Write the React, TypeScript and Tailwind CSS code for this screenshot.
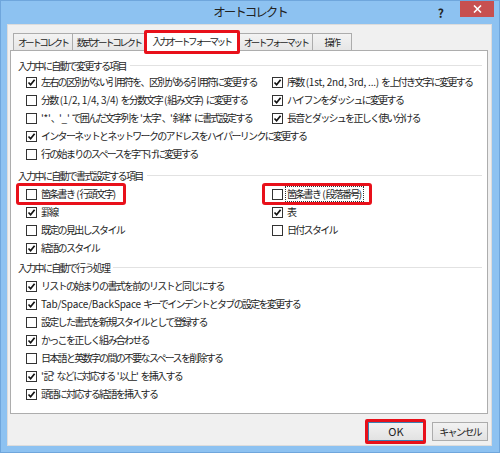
import React from "react";

type Item = { label: string; checked: boolean; mark?: boolean; focus?: boolean };

const typing: { left: Item[]; right: Item[] } = {
  left: [
    { label: "左右の区別がない引用符を、区別がある引用符に変更する", checked: true },
    { label: "分数 (1/2, 1/4, 3/4) を分数文字 (組み文字) に変更する", checked: false },
    { label: "'*'、'_' で囲んだ文字列を '太字'、'斜体' に書式設定する", checked: false },
    { label: "インターネットとネットワークのアドレスをハイパーリンクに変更する", checked: true },
    { label: "行の始まりのスペースを字下げに変更する", checked: false },
  ],
  right: [
    { label: "序数 (1st, 2nd, 3rd, ...) を上付き文字に変更する", checked: true },
    { label: "ハイフンをダッシュに変更する", checked: true },
    { label: "長音とダッシュを正しく使い分ける", checked: true },
  ],
};

const formatting: { left: Item[]; right: Item[] } = {
  left: [
    { label: "箇条書き (行頭文字)", checked: false, mark: true },
    { label: "罫線", checked: true },
    { label: "既定の見出しスタイル", checked: false },
    { label: "結語のスタイル", checked: true },
  ],
  right: [
    { label: "箇条書き (段落番号)", checked: false, mark: true, focus: true },
    { label: "表", checked: true },
    { label: "日付スタイル", checked: false },
  ],
};

const actions: Item[] = [
  { label: "リストの始まりの書式を前のリストと同じにする", checked: true },
  { label: "Tab/Space/BackSpace キーでインデントとタブの設定を変更する", checked: true },
  { label: "設定した書式を新規スタイルとして登録する", checked: false },
  { label: "かっこを正しく組み合わせる", checked: true },
  { label: "日本語と英数字の間の不要なスペースを削除する", checked: false },
  { label: "'記' などに対応する '以上' を挿入する", checked: true },
  { label: "頭語に対応する結語を挿入する", checked: true },
];

const tabs = ["オートコレクト", "数式オートコレクト", "入力オートフォーマット", "オートフォーマット", "操作"];

// kana/kanji are set tight, latin runs keep normal spacing
function Label({ text }: { text: string }) {
  const parts = text.split(/([\x20-\x7e]+)/).filter(Boolean);
  return (
    <>
      {parts.map((p, i) =>
        /^[\x20-\x7e]+$/.test(p) ? (
          <span key={i} className="tracking-[-0.2px] whitespace-pre">
            {p}
          </span>
        ) : (
          <span key={i}>{p}</span>
        )
      )}
    </>
  );
}

function Box({ checked }: { checked: boolean }) {
  return (
    <span className="flex h-[11px] w-[11px] shrink-0 items-center justify-center border border-[#333] bg-white">
      {checked && (
        <svg width="9" height="9" viewBox="0 0 9 9" fill="none">
          <path d="M1.5 4.5 L3.6 6.8 L7.6 1.8" stroke="#111" strokeWidth="1.7" />
        </svg>
      )}
    </span>
  );
}

function Row({ item }: { item: Item }) {
  return (
    <div className="relative flex h-[18px] w-fit items-center gap-[3px]">
      <Box checked={item.checked} />
      <span
        className={`whitespace-nowrap px-[1px] leading-[14px] ${
          item.focus ? "outline outline-1 outline-dotted outline-[#333]" : ""
        }`}
      >
        <Label text={item.label} />
      </span>
      {item.mark && (
        <div className="pointer-events-none absolute -left-[10px] -right-[9px] -top-[2px] -bottom-[2px] rounded-[3px] border-[3px] border-[#e8101a]" />
      )}
    </div>
  );
}

function Heading({ text }: { text: string }) {
  return (
    <div className="flex h-[16px] items-center gap-[4px] pr-[5px] text-[#1f1f1f]">
      <span className="whitespace-nowrap">{text}</span>
      <div className="h-px flex-1 bg-[#e2e2e2]" />
    </div>
  );
}

export default function App() {
  return (
    <div className="flex h-[453px] w-[500px] flex-col border border-[#6fa6dc] bg-[#8dc2f1] font-['Noto_Sans_CJK_JP',sans-serif] text-[10px] tracking-[-1.7px] text-[#1e1e1e]">
      {/* title bar */}
      <div className="relative flex h-[23px] shrink-0 items-center justify-center">
        <span className="text-[12.5px] tracking-[-2px] text-[#222]">オートコレクト</span>
        <div className="absolute right-[5px] top-0 flex items-start">
          <span className="mr-[16px] mt-[3px] text-[12px] font-bold tracking-normal text-[#222]">?</span>
          <div className="flex h-[16px] w-[34px] items-center justify-center bg-[#c75050]">
            <svg width="9" height="8" viewBox="0 0 9 8">
              <path d="M1 0.5 L8 7.5 M8 0.5 L1 7.5" stroke="white" strokeWidth="1.6" />
            </svg>
          </div>
        </div>
      </div>

      {/* client area */}
      <div className="mb-[6px] ml-[6px] mr-[7px] flex flex-1 flex-col border border-[#dcdcdc] bg-[#f0f0f0] pl-[2px]">
        <div className="mt-[6px] flex h-[19px] items-end pl-[3px] text-[9.5px] tracking-[-2.4px]">
          {tabs.map((t, i) =>
            i === 2 ? (
              <div key={t} className="relative z-10 -mb-px -ml-px flex h-[20px] items-center border border-b-0 border-[#acacac] bg-white px-[7px]">
                {t}
                <div className="pointer-events-none absolute -left-[2px] -right-[2px] -top-[2px] -bottom-[3px] rounded-[2px] border-[3px] border-[#e8101a]" />
              </div>
            ) : (
              <div
                key={t}
                className={`flex h-[17px] items-center justify-center border border-b-0 border-[#acacac] bg-gradient-to-b from-[#f3f3f3] to-[#e6e6e6] px-[4px] ${
                  i === 0 || i === 3 ? "" : "-ml-px"
                } ${i === 4 ? "w-[40px]" : ""}`}
              >
                {t}
              </div>
            )
          )}
        </div>

        {/* tab panel */}
        <div className="flex h-[364px] w-[478px] flex-col border border-[#adadad] bg-white pl-[7px] pt-[6px]">
          <Heading text="入力中に自動で変更する項目" />
          <div className="flex pl-[8px]">
            <div className="flex w-[246px] flex-col">
              {typing.left.map((it) => (
                <Row key={it.label} item={it} />
              ))}
            </div>
            <div className="flex flex-col">
              {typing.right.map((it) => (
                <Row key={it.label} item={it} />
              ))}
            </div>
          </div>

          <div className="mt-[4px]">
            <Heading text="入力中に自動で書式設定する項目" />
          </div>
          <div className="mt-[2px] flex pl-[8px]">
            <div className="flex w-[246px] flex-col">
              {formatting.left.map((it) => (
                <Row key={it.label} item={it} />
              ))}
            </div>
            <div className="flex flex-col">
              {formatting.right.map((it) => (
                <Row key={it.label} item={it} />
              ))}
            </div>
          </div>

          <div className="mt-[2px]">
            <Heading text="入力中に自動で行う処理" />
          </div>
          <div className="mt-[2px] flex flex-col pl-[8px]">
            {actions.map((it) => (
              <Row key={it.label} item={it} />
            ))}
          </div>
        </div>

        {/* buttons */}
        <div className="mt-[8px] flex w-[478px] justify-end gap-[8px]">
          <div className="relative">
            <button className="flex h-[19px] w-[56px] items-center justify-center border border-[#3c7fb1] bg-gradient-to-b from-[#f2f2f2] to-[#e2e2e2] text-[11px] tracking-normal">
              OK
            </button>
            <div className="pointer-events-none absolute -left-[3px] -right-[2px] -top-[3px] -bottom-[3px] rounded-[2px] border-[3px] border-[#e8101a]" />
          </div>
          <button className="flex h-[19px] w-[56px] items-center justify-center border border-[#acacac] bg-gradient-to-b from-[#f2f2f2] to-[#e2e2e2] text-[10px]">
            キャンセル
          </button>
        </div>
      </div>
    </div>
  );
}
